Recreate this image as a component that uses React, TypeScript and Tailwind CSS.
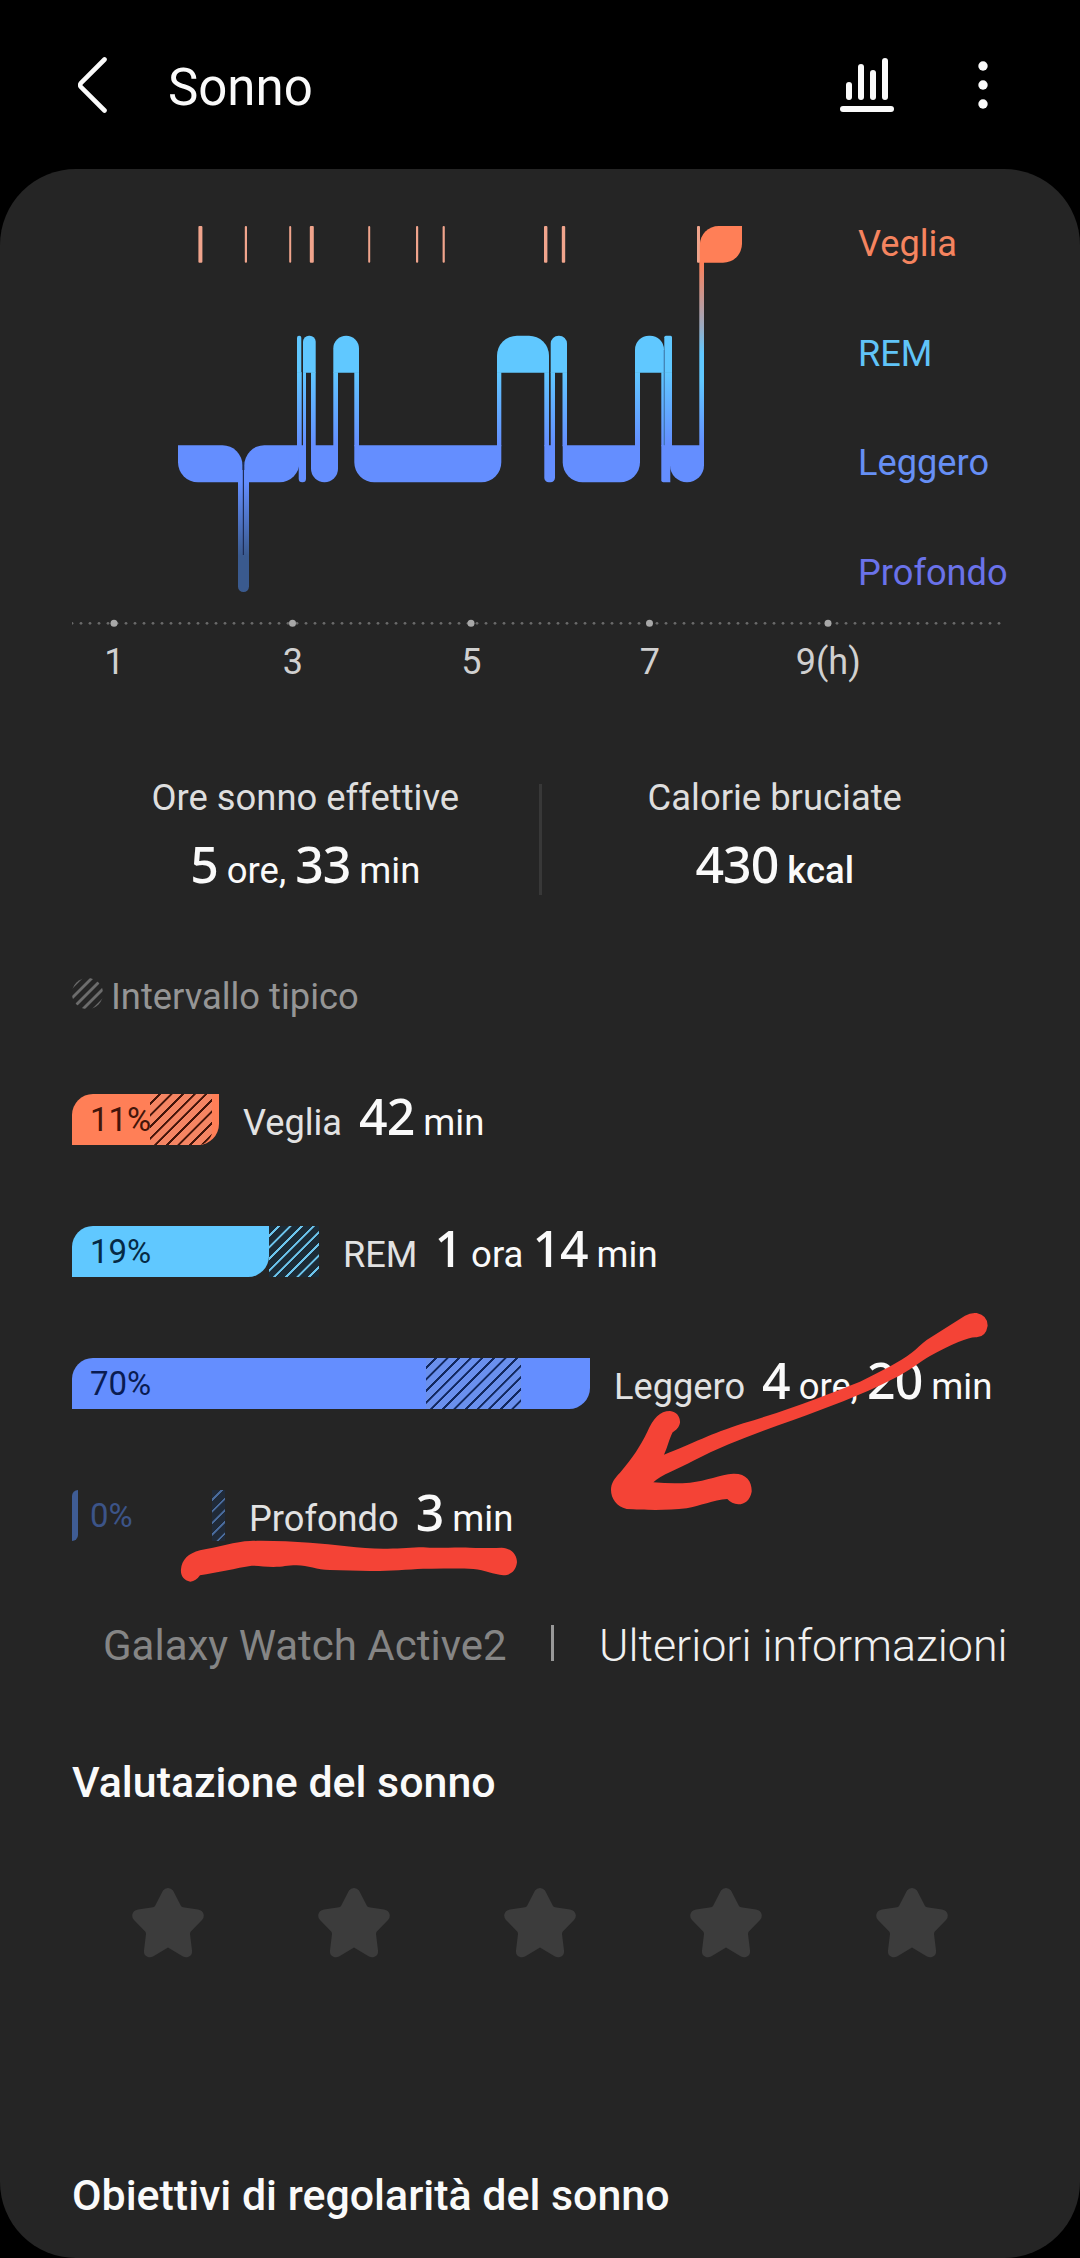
import React from 'react';

interface Shape {
  d: string;
  fill: string;
}

interface Part {
  value: string;
  unit: string;
}

interface Stage {
  name: string;
  percent: string;
  parts: Part[];
  trackClass: string;
  fillClass: string;
  percentClass: string;
  hatchClass: string;
}

const WAKE = '#ff7f57';
const REM = '#60c8ff';
const LIGHT = '#648eff';
const DEEP = '#3a5a8e';

// Rectangle with a radius for each corner: tl, tr, br, bl
function box(x1: number, y1: number, x2: number, y2: number, tl = 0, tr = 0, br = 0, bl = 0): string {
  return `M${x1 + tl} ${y1}H${x2 - tr}a${tr} ${tr} 0 0 1 ${tr} ${tr}V${y2 - br}a${br} ${br} 0 0 1 ${-br} ${br}H${x1 + bl}a${bl} ${bl} 0 0 1 ${-bl} ${-bl}V${y1 + tl}a${tl} ${tl} 0 0 1 ${tl} ${-tl}Z`;
}

const lightBlocks: Shape[] = [
  box(178, 445.3, 242.5, 482.3, 0, 20, 0, 20),
  box(244.3, 445.3, 299.5, 482.3, 20, 0, 20, 0),
  box(298.7, 445.3, 306, 482.3, 0, 0, 3.5, 3.5),
  box(311, 445.3, 338, 482.3, 0, 0, 13.5, 13.5),
  box(354.3, 445.3, 501.3, 482.3, 0, 0, 20, 20),
  box(544.3, 445.3, 555, 482.3, 0, 0, 4.5, 4.5),
  box(562.7, 445.3, 640, 482.3, 0, 0, 20, 20),
  box(661.3, 445.3, 670.3, 482.3, 0, 0, 0, 2),
  box(670, 445.3, 704, 482.3, 0, 0, 17, 17),
].map(d => ({ d, fill: LIGHT }));

const remBlocks: Shape[] = [
  box(297, 335.7, 301.3, 372.7, 2, 2),
  box(303, 335.7, 315.7, 372.7, 6, 6),
  box(333.3, 335.7, 359, 372.7, 12.8, 12.8),
  box(497, 335.7, 549, 372.7, 20, 20),
  box(550.7, 335.7, 567, 372.7, 8, 8),
  box(635, 335.7, 664, 372.7, 14, 14),
  box(664.3, 335.7, 672, 372.7, 1.5, 1.5),
].map(d => ({ d, fill: REM }));

const remStems = [
  [297, 301.7],
  [303, 306],
  [311, 315.7],
  [333.3, 338],
  [354.3, 359],
  [497, 501.3],
  [544.3, 549],
  [550.7, 555],
  [562.5, 567],
  [635, 640],
  [661.3, 664],
  [664.3, 672],
];

const wakeTicks = [
  [198.4, 4],
  [244.8, 2.2],
  [289.2, 2],
  [309.8, 4],
  [368.2, 2],
  [416, 2.2],
  [442.6, 2.2],
  [544, 3.4],
  [561.8, 3.4],
  [697, 3],
];

const stages: Stage[] = [
  {
    name: 'Veglia',
    percent: '11%',
    parts: [{ value: '42', unit: 'min' }],
    trackClass: 'w-[147px]',
    fillClass: 'w-[147px] rounded-tl-[21px] rounded-br-[21px] bg-[#ff7f57]',
    percentClass: 'text-[#43150a]',
    hatchClass:
      'left-[78px] w-[62px] rounded-br-[14px] bg-[#f58563] bg-[repeating-linear-gradient(135deg,transparent_0px,transparent_5.8px,#43150a_6.2px,#43150a_7.8px,transparent_8.2px)]',
  },
  {
    name: 'REM',
    percent: '19%',
    parts: [
      { value: '1', unit: 'ora' },
      { value: '14', unit: 'min' },
    ],
    trackClass: 'w-[247px]',
    fillClass: 'w-[197px] rounded-tl-[21px] rounded-br-[21px] bg-[#60c8ff]',
    percentClass: 'text-[#062a45]',
    hatchClass:
      'left-[197px] w-[50px] bg-[#1c2b36] bg-[repeating-linear-gradient(135deg,transparent_0px,transparent_5.8px,#6cc4ec_6.2px,#6cc4ec_7.8px,transparent_8.2px)]',
  },
  {
    name: 'Leggero',
    percent: '70%',
    parts: [
      { value: '4', unit: 'ore,' },
      { value: '20', unit: 'min' },
    ],
    trackClass: 'w-[518px]',
    fillClass: 'w-[518px] rounded-tl-[21px] rounded-br-[21px] bg-[#648eff]',
    percentClass: 'text-[#0a1c52]',
    hatchClass:
      'left-[354px] w-[95px] bg-[#6a90ee] bg-[repeating-linear-gradient(135deg,transparent_0px,transparent_5.8px,#12285f_6.2px,#12285f_7.8px,transparent_8.2px)]',
  },
  {
    name: 'Profondo',
    percent: '0%',
    parts: [{ value: '3', unit: 'min' }],
    trackClass: 'w-[153px]',
    fillClass: 'w-[6px] rounded-tl-[6px] rounded-br-[6px] bg-[#3f5c94]',
    percentClass: 'text-[#3c5488]',
    hatchClass:
      'left-[140px] w-[13px] bg-[#202a38] bg-[repeating-linear-gradient(135deg,transparent_0px,transparent_6px,#4a6c9e_6.4px,#4a6c9e_7.8px,transparent_8.2px)]',
  },
];

function BackIcon() {
  return (
    <svg className="h-[58px] w-[29px]" viewBox="0 0 29 58" fill="none">
      <path d="M26.5 3.5 L2.8 27.2 Q1.6 29 2.8 30.8 L26.5 54.5" stroke="#fafafa" strokeWidth="4.6" strokeLinecap="round" />
    </svg>
  );
}

function TrendsIcon() {
  return (
    <svg className="h-[54px] w-[54px]" viewBox="0 0 54 54" fill="#fafafa">
      <rect x="6" y="24" width="6" height="18" rx="3" />
      <rect x="18" y="6" width="6" height="36" rx="3" />
      <rect x="30" y="12" width="6" height="30" rx="3" />
      <rect x="42" y="0" width="6" height="42" rx="3" />
      <rect x="0" y="48" width="54" height="6" rx="3" />
    </svg>
  );
}

function MoreIcon() {
  return (
    <svg className="h-[50px] w-[10px]" viewBox="0 0 10 50" fill="#fafafa">
      <circle cx="5" cy="6" r="4.7" />
      <circle cx="5" cy="25" r="4.7" />
      <circle cx="5" cy="44" r="4.7" />
    </svg>
  );
}

function StarIcon() {
  return (
    <svg className="h-[70px] w-[72px]" viewBox="0 0 72 70" fill="#3c3c3c">
      <path d="M31 2.5 Q33 0 36 0 Q39 0 41 2.5 L49 18 Q49.5 19 51 19.3 L66 21.6 Q71 22.5 71.8 27 Q72 30 70 32 L58.8 43.5 Q58 44.5 58 46 L60 62.5 Q60.5 67.5 56 69 Q53.5 69.8 51 68.5 L36 59.5 L21 68.5 Q18.5 69.8 16 69 Q11.5 67.5 12 62.5 L14 46 Q14 44.5 13.2 43.5 L2 32 Q0 30 0.2 27 Q1 22.5 6 21.6 L21 19.3 Q22.5 19 23 18 Z" />
    </svg>
  );
}

function HatchDot() {
  return (
    <svg className="mt-[2px] h-[31px] w-[31px]" viewBox="0 0 31 31">
      <clipPath id="dot">
        <circle cx="15.5" cy="15.5" r="15.5" />
      </clipPath>
      <g clipPath="url(#dot)" stroke="#6c6c6c" strokeWidth="2.8">
        {[9, 20, 31, 42, 53].map(n => (
          <path key={n} d={`M-2 ${n + 2} L${n + 2} -2`} />
        ))}
      </g>
    </svg>
  );
}

function SleepChart() {
  return (
    <svg className="h-[367px] w-[786px]" viewBox="72 226 786 367">
      <defs>
        <linearGradient id="remToLight" gradientUnits="userSpaceOnUse" x1="0" y1="372" x2="0" y2="445">
          <stop offset="0" stopColor={REM} />
          <stop offset="1" stopColor={LIGHT} />
        </linearGradient>
        <linearGradient id="lightToDeep" gradientUnits="userSpaceOnUse" x1="0" y1="482" x2="0" y2="556">
          <stop offset="0" stopColor={LIGHT} />
          <stop offset="1" stopColor={DEEP} />
        </linearGradient>
        <linearGradient id="wakeToLight" gradientUnits="userSpaceOnUse" x1="0" y1="262" x2="0" y2="445">
          <stop offset="0" stopColor={WAKE} />
          <stop offset="0.35" stopColor="#9caac0" />
          <stop offset="0.5" stopColor={REM} />
          <stop offset="0.65" stopColor={REM} />
          <stop offset="1" stopColor={LIGHT} />
        </linearGradient>
      </defs>
      {remStems.map(([x1, x2]) => (
        <rect key={x1} x={x1} y={372.2} width={x2 - x1} height={74} fill="url(#remToLight)" />
      ))}
      <rect x={699.3} y={262} width={4.7} height={184} fill="url(#wakeToLight)" />
      <path d={box(238, 470, 249, 592, 0, 0, 5.5, 5.5)} fill="url(#lightToDeep)" />
      {[...lightBlocks, ...remBlocks].map(s => (
        <path key={s.d} d={s.d} fill={s.fill} />
      ))}
      <rect x={242.8} y={462} width={1.2} height={93} fill="#1d2c55" />
      <rect x={663.7} y={350} width={0.8} height={95} fill="#3b78b0" />
      {wakeTicks.map(([x, w]) => (
        <rect key={x} x={x} y={226} width={w} height={36.7} rx={1} fill="#f0a48c" />
      ))}
      <path d={box(699.8, 226, 742, 262.7, 19, 0, 19, 0)} fill={WAKE} />
    </svg>
  );
}

function TimeAxis() {
  const hours = ['1', '3', '5', '7', '9(h)'];
  return (
    <>
      <svg className="mt-[23px] ml-[72px] h-[14px] w-[936px]" viewBox="72 616 936 14">
        {Array.from({ length: 104 }, (_, i) => (
          <circle key={i} cx={72 + i * 9} cy={623.3} r={1.4} fill="#6a6a6a" />
        ))}
        {hours.map((h, i) => (
          <circle key={h} cx={114 + i * 178.5} cy={623.3} r={3.5} fill="#a8a8a8" />
        ))}
      </svg>
      <div className="mt-[11px] ml-[25px] flex text-[36px] leading-[42px] text-[#d0d0d0]">
        {hours.map(h => (
          <span key={h} className="w-[178.5px] text-center">{h}</span>
        ))}
      </div>
    </>
  );
}

function Amount({ parts, bold }: { parts: Part[]; bold?: boolean }) {
  return (
    <div className="flex h-[50px] items-baseline gap-[9px] text-[36.5px] leading-[42px] whitespace-nowrap text-[#fafafa]">
      {parts.map(p => (
        <React.Fragment key={p.value}>
          <span className="font-['Noto_Sans',sans-serif] text-[50px] font-medium tracking-[-1px]">{p.value}</span>
          <span className={bold ? 'font-medium' : ''}>{p.unit}</span>
        </React.Fragment>
      ))}
    </div>
  );
}

function StageRow({ stage }: { stage: Stage }) {
  return (
    <div className="flex h-[51px] items-start">
      <div className={`relative h-[51px] shrink-0 ${stage.trackClass}`}>
        <div className={`h-[51px] ${stage.fillClass}`} />
        <div className={`absolute top-0 h-[51px] ${stage.hatchClass}`} />
        <span className={`absolute top-0 left-[18px] text-[33px] leading-[51px] ${stage.percentClass}`}>{stage.percent}</span>
      </div>
      <div className="mt-[1px] flex items-baseline">
        <span className="mr-[17px] ml-[24px] text-[36.2px] leading-[42px] text-[#e2e2e2]">{stage.name}</span>
        <Amount parts={stage.parts} />
      </div>
    </div>
  );
}

// Freehand marker strokes lying over the list
function MarkerStrokes() {
  return (
    <svg className="pointer-events-none absolute top-[1300px] left-[170px] h-[290px] w-[840px]" viewBox="170 1300 840 290" fill="#f44336">
      <g transform="translate(560 1280) scale(0.33333)">
        <path d="M1215 107 Q1232 97 1250 99 Q1283 106 1283 137 Q1278 170 1250 172 Q1220 168 1110 228 C1080 245 1050 272 1000 296 C900 348 800 382 700 420 C600 455 500 490 400 542 C360 565 300 585 280 607 Q340 612 390 608 C440 602 480 584 520 581 C560 580 576 605 575 635 C570 660 555 673 535 673 Q515 672 502 657 C460 660 420 678 380 685 C320 692 250 690 200 687 C170 680 153 655 153 630 C153 610 163 595 180 578 C220 530 240 500 262 455 C280 415 300 393 330 393 C350 395 361 410 360 428 C357 443 348 450 338 457 C328 475 322 505 312 524 C400 490 450 462 550 430 C700 385 800 345 900 305 C960 275 1020 245 1055 218 C1070 208 1085 190 1100 180 Z" />
      </g>
      <g transform="translate(50 1440) scale(0.33333)">
        <path d="M393 388 C395 360 415 340 450 331 C500 322 560 304 600 303 C660 301 720 305 780 308 C850 312 930 326 1000 326 C1050 327 1080 322 1120 322 C1160 326 1210 321 1260 323 C1300 324 1330 325 1355 323 C1385 325 1401 345 1401 367 C1398 392 1382 406 1360 406 C1330 403 1305 390 1270 387 C1220 384 1170 387 1120 386 C1070 388 1010 394 960 393 C920 393 880 390 840 390 C800 390 775 376 740 376 C710 376 700 381 670 381 C645 381 625 377 605 377 C560 384 500 398 450 406 Q438 424 421 425 C400 422 391 405 393 388 Z" />
      </g>
    </svg>
  );
}

export default function App() {
  return (
    <div className="relative h-[2258px] w-[1080px] overflow-hidden bg-black font-['Roboto',sans-serif]">
      <header className="flex h-[169px] items-center pr-[92px] pl-[78px]">
        <BackIcon />
        <h1 className="mt-[6px] ml-[61px] text-[51px] leading-[60px] text-[#fafafa]">Sonno</h1>
        <div className="ml-auto flex items-center gap-[84px]">
          <TrendsIcon />
          <MoreIcon />
        </div>
      </header>

      <main className="h-[2089px] rounded-[76px] bg-[#252525] pt-[57px]">
        <div className="flex pl-[72px]">
          <SleepChart />
          <div className="flex h-[365px] flex-col justify-between text-[36.2px] leading-[36px]">
            <span className="text-[#f5845f]">Veglia</span>
            <span className="text-[#60c4f8]">REM</span>
            <span className="text-[#668ff5]">Leggero</span>
            <span className="text-[#6a72ea]">Profondo</span>
          </div>
        </div>
        <TimeAxis />

        <section className="mt-[94px] flex px-[72px]">
          <div className="flex flex-1 flex-col items-center">
            <p className="mb-[24px] text-[36.4px] leading-[42px] text-[#dedede]">Ore sonno effettive</p>
            <Amount parts={[{ value: '5', unit: 'ore,' }, { value: '33', unit: 'min' }]} />
          </div>
          <div className="mt-[7px] h-[111px] w-[3px] bg-[#383838]" />
          <div className="flex flex-1 flex-col items-center">
            <p className="mb-[24px] text-[36.4px] leading-[42px] text-[#dedede]">Calorie bruciate</p>
            <Amount parts={[{ value: '430', unit: 'kcal' }]} bold />
          </div>
        </section>

        <div className="mt-[81px] flex gap-[8px] px-[72px]">
          <HatchDot />
          <span className="text-[36.3px] leading-[42px] text-[#959595]">Intervallo tipico</span>
        </div>

        <section className="mt-[76px] flex flex-col gap-[81px] px-[72px]">
          {stages.map(s => (
            <StageRow key={s.name} stage={s} />
          ))}
        </section>

        <div className="mt-[80px] flex h-[50px] pl-[103px] text-[42px] leading-[50px] whitespace-nowrap">
          <span className="w-[448px] text-[#858585]">Galaxy Watch Active2</span>
          <div className="mt-[4px] h-[36px] w-[3px] bg-[#999999]" />
          <span className="ml-[45px] text-[44.8px] font-light text-[#f0f0f0]">Ulteriori informazioni</span>
        </div>

        <h2 className="mt-[86px] px-[72px] text-[42.9px] leading-[50px] font-medium text-[#fafafa]">Valutazione del sonno</h2>
        <div className="mt-[81px] flex gap-[114px] pl-[132px]">
          {[1, 2, 3, 4, 5].map(n => (
            <StarIcon key={n} />
          ))}
        </div>

        <h2 className="mt-[212px] px-[72px] text-[42.9px] leading-[50px] font-medium text-[#fafafa]">
          Obiettivi di regolarità del sonno
        </h2>
      </main>
      <MarkerStrokes />
    </div>
  );
}
